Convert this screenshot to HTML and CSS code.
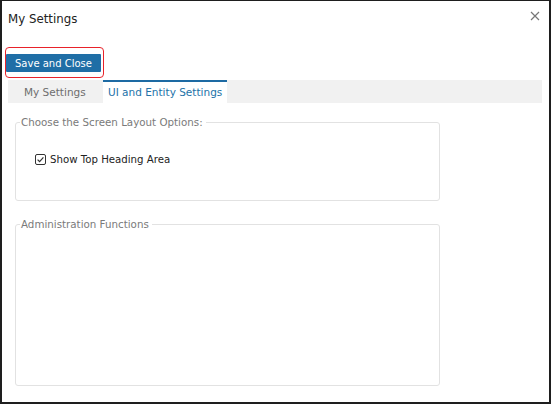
FILE: index.html
```html
<!DOCTYPE html>
<html>
<head>
<meta charset="utf-8">
<link rel="stylesheet" href="styles.css">
</head>
<body>
<div class="dialog">
  <div class="titlebar">
    <span class="title">My Settings</span>
    <svg class="close" width="10" height="10" viewBox="0 0 10 10">
      <path d="M1 1 L9 9 M9 1 L1 9" stroke="#777" stroke-width="1.2" fill="none"/>
    </svg>
  </div>
  <div class="toolbar">
    <div class="highlight">
      <button class="btn">Save and Close</button>
    </div>
  </div>
  <div class="tabs">
    <div class="tab">My Settings</div>
    <div class="tab active">UI and Entity Settings</div>
  </div>
  <div class="content">
    <fieldset class="group group-layout">
      <legend>Choose the Screen Layout Options:</legend>
      <label class="check">
        <svg class="box" width="11" height="11" viewBox="0 0 11 11">
          <rect x="0.5" y="0.5" width="10" height="10" rx="1.5" fill="#fff" stroke="#333" stroke-width="1"/>
          <path d="M2.6 5.6 L4.6 7.6 L8.4 3.4" fill="none" stroke="#333" stroke-width="1.2"/>
        </svg>
        <span>Show Top Heading Area</span>
      </label>
    </fieldset>
    <fieldset class="group group-admin">
      <legend>Administration Functions</legend>
    </fieldset>
  </div>
</div>
</body>
</html>
```

FILE: styles.css
```css
html, body {
  margin: 0;
  padding: 0;
  background: #fff;
}
body {
  font-family: "DejaVu Sans", Verdana, sans-serif;
}
.dialog {
  box-sizing: border-box;
  width: 551px;
  height: 404px;
  border-left: 2px solid #1e1e1e;
  border-top: 1px solid #1e1e1e;
  border-right: 2px solid #1e1e1e;
  border-bottom: 2px solid #1e1e1e;
  background: #fff;
  display: flex;
  flex-direction: column;
}
.titlebar {
  height: 36px;
  display: flex;
  align-items: flex-start;
  justify-content: space-between;
  padding: 0 9px 0 6px;
}
.title {
  font-size: 11.8px;
  color: #222;
  margin-top: 11px;
}
.close {
  display: block;
  margin-top: 10px;
}
.toolbar {
  height: 43px;
  display: flex;
  align-items: flex-start;
  padding-left: 3px;
}
.highlight {
  margin-top: 10px;
  border: 1.5px solid #e8222a;
  border-radius: 4px;
  padding: 6px 2px 4px 0px;
  width: 99px;
  box-sizing: border-box;
  height: 31px;
}
.btn {
  display: block;
  margin: 0;
  width: 95px;
  height: 18px;
  border: none;
  background: #1f6ea6;
  color: #fff;
  font-family: "DejaVu Sans", Verdana, sans-serif;
  font-size: 10px;
  padding: 0;
  border-radius: 1px;
}
.tabs {
  margin-left: 6px;
  width: 534px;
  height: 23px;
  background: #f1f1f1;
  display: flex;
}
.tab {
  font-size: 10.5px;
  color: #6e6e6e;
  padding: 6px 16px 0 16px;
  box-sizing: border-box;
  width: 95px;
  height: 23px;
}
.tab.active {
  width: 124px;
  background: #fff;
  color: #2372a8;
  border-top: 2px solid #1d6aa3;
  padding: 4px 0 0 5px;
}
.content {
  padding: 13px 0 0 13px;
  display: flex;
  flex-direction: column;
}
.group {
  margin: 0;
  width: 425px;
  box-sizing: border-box;
  border: 1px solid #e2e2e2;
  border-radius: 3px;
  padding: 0 0 0 19px;
}
.group legend {
  font-size: 10.3px;
  color: #7a7a7a;
  padding: 0 3px 0 1px;
  margin-left: -15px;
}
.group-layout {
  height: 85px;
}
.group-admin {
  margin-top: 17px;
  height: 168px;
}
.check {
  display: flex;
  align-items: center;
  gap: 4px;
  margin-top: 26px;
  font-size: 10.2px;
  color: #222;
}
.box {
  display: block;
}
```
